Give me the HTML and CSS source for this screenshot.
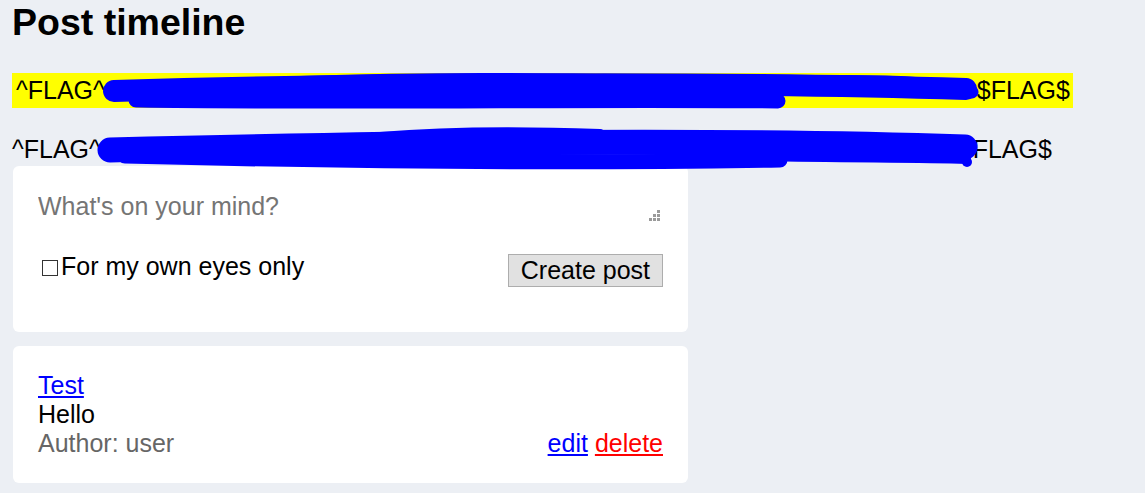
FILE: index.html
```html
<!DOCTYPE html>
<html lang="en">
<head>
  <meta charset="UTF-8">
  <title>Post timeline</title>
  <link rel="stylesheet" href="styles.css">
</head>
<body>
  <h1>Post timeline</h1>

  <div class="flag flag-marked">^FLAG^<span class="redacted redacted-a"></span>$FLAG$</div>
  <div class="flag">^FLAG^<span class="redacted redacted-b"></span>$FLAG$</div>

  <!-- blue marker over the flag values -->
  <svg class="scribble" width="1145" height="200" viewBox="0 0 1145 200">
    <g fill="none" stroke="#0000ff" stroke-linecap="round" stroke-linejoin="round">
      <path d="M114 91 C350 84, 700 81, 966 89" stroke-width="22"/>
      <path d="M136 100 C350 103, 600 99, 778 101" stroke-width="15"/>
      <path d="M740 84 C850 79, 940 81, 972 92" stroke-width="13"/>
      <path d="M300 80 C420 76, 520 76, 640 79" stroke-width="8"/>
      <path d="M110 150 C400 143, 700 138, 965 147" stroke-width="25"/>
      <path d="M125 156 C400 163, 600 163, 780 160" stroke-width="15"/>
      <path d="M760 156 C850 158, 920 157, 966 159" stroke-width="10"/>
      <path d="M380 136 C450 130, 520 130, 600 133" stroke-width="8"/>
    </g>
    <circle cx="967" cy="162" r="5" fill="#0000ff"/>
  </svg>

  <form class="card new-post">
    <div class="textarea-wrap">
      <textarea placeholder="What's on your mind?"></textarea>
      <svg class="grip" width="11" height="11" viewBox="0 0 11 11">
        <g fill="#9a9a9a">
          <rect x="8" y="0" width="3" height="3"/>
          <rect x="4" y="4" width="3" height="3"/>
          <rect x="8" y="4" width="3" height="3"/>
          <rect x="0" y="8" width="3" height="3"/>
          <rect x="4" y="8" width="3" height="3"/>
          <rect x="8" y="8" width="3" height="3"/>
        </g>
      </svg>
    </div>
    <div class="form-row">
      <label><input type="checkbox">For my own eyes only</label>
      <button type="button">Create post</button>
    </div>
  </form>

  <div class="card post">
    <a href="#" class="post-title">Test</a>
    <div class="post-body">Hello</div>
    <div class="post-footer">
      <span class="author">Author: user</span>
      <span class="actions"><a href="#" class="edit">edit</a> <a href="#" class="delete">delete</a></span>
    </div>
  </div>
</body>
</html>
```

FILE: styles.css
```css
body {
  margin: 0;
  padding: 0 12px;
  position: relative;
  background-color: #eceff4;
  color: #000;
  font-family: "Liberation Sans", Arial, sans-serif;
  font-size: 25px;
}

h1 { margin: 1px 0 0 0; font-size: 37.5px; font-weight: bold; }

.flag { white-space: nowrap; }
.flag-marked {
  width: fit-content;
  margin-top: 29px;
  padding: 3px 3px 3px 4px;
  background-color: #ffff00;
}
.flag + .flag { margin-top: 27px; }
.redacted { display: inline-block; }
.redacted-a { width: 872px; }
.redacted-b { width: 858px; }

.scribble { position: absolute; top: 0; left: 0; pointer-events: none; z-index: 2; }

.card {
  box-sizing: border-box;
  width: 675px;
  margin-left: 1px;
  padding: 25px;
  background: #fff;
  border-radius: 6px;
}
.new-post { margin-top: 2px; }
.post { margin-top: 14px; }

.textarea-wrap { position: relative; }
textarea {
  display: block;
  box-sizing: border-box;
  width: 100%;
  height: 31px;
  padding: 1px 0;
  border: none;
  outline: none;
  resize: none;
  font-family: inherit;
  font-size: 25px;
  color: #000;
  background: transparent;
}
textarea::placeholder { color: #757575; }
.grip { position: absolute; right: 3px; bottom: 1px; }

.form-row {
  display: flex;
  justify-content: space-between;
  align-items: flex-start;
  margin: 30px 0 20px;
}
input[type="checkbox"] {
  appearance: none;
  box-sizing: border-box;
  width: 16px;
  height: 16px;
  margin: 0 3px 0 4px;
  vertical-align: -1px;
  border: 1px solid #333;
  background: #fff;
}
button {
  margin-top: 2px;
  padding: 1px 12px;
  font-family: inherit;
  font-size: 25px;
  color: #000;
  background: #e1e1e1;
  border: 1px solid #adadad;
  border-radius: 0;
}

.post-title { color: #0000ff; }
.post-footer { display: flex; justify-content: space-between; }
.author { color: #666; }
.edit { color: #0000ff; }
.delete { color: #ff0000; }
```
